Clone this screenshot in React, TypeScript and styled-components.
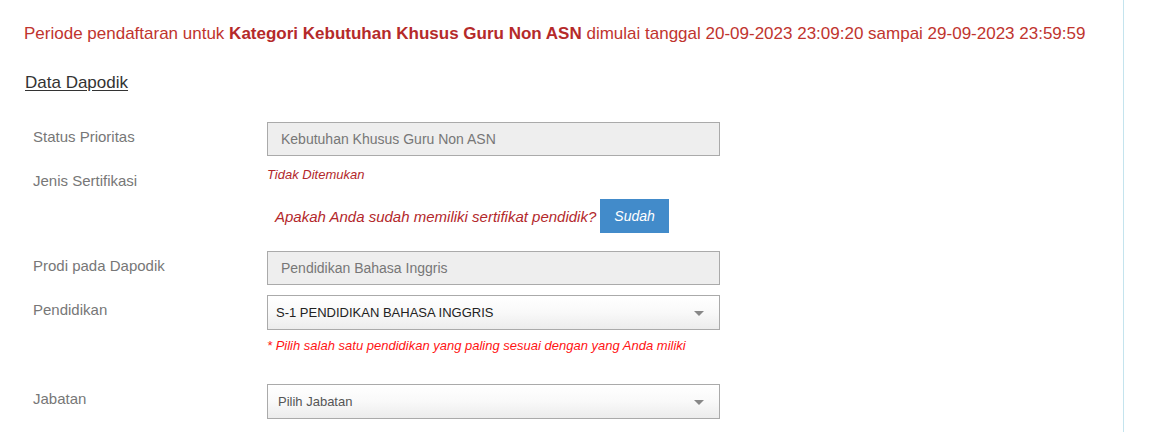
import React from 'react';
import styled, { createGlobalStyle } from 'styled-components';

const GlobalStyle = createGlobalStyle`
  html, body {
    margin: 0;
    padding: 0;
    background: #ffffff;
    font-family: 'Liberation Sans', Arial, sans-serif;
  }
`;

const Page = styled.div`
  width: 1124px;
  height: 432px;
  box-sizing: border-box;
  border-right: 1px solid #c4e4ee;
  padding: 22px 0 0 24px;
  overflow: hidden;
`;

const Notice = styled.p`
  margin: 0;
  font-size: 17px;
  line-height: 24px;
  color: #c0342e;
  white-space: nowrap;

  b {
    color: #b52a2a;
  }
`;

const SectionTitle = styled.h4`
  margin: 25px 0 0 1px;
  font-size: 17px;
  line-height: 24px;
  font-weight: normal;
  color: #333;
  text-decoration: underline;
  text-underline-offset: 2px;
`;

const Form = styled.div`
  margin-top: 27px;
  padding-left: 9px;
`;

const Row = styled.div<{ $gap?: number }>`
  display: grid;
  grid-template-columns: 234px 453px;
  margin-bottom: ${p => p.$gap ?? 10}px;
`;

const Label = styled.label`
  padding-top: 5px;
  font-size: 15px;
  line-height: 20px;
  color: #777;
`;

const Field = styled.div`
  display: flex;
  flex-direction: column;
`;

const ReadOnly = styled.div`
  height: 34px;
  box-sizing: border-box;
  border: 1px solid #aaa;
  background: #eeeeee;
  padding: 0 13px;
  display: flex;
  align-items: center;
  font-size: 14px;
  color: #777;
`;

const SelectBox = styled.div<{ $muted?: boolean }>`
  position: relative;
  height: 35px;
  box-sizing: border-box;
  border: 1px solid #aaa;
  background: linear-gradient(to bottom, #ffffff 0%, #f9f9f9 50%, #ececec 100%);
  padding: 0 30px 0 ${p => (p.$muted ? 10 : 8)}px;
  display: flex;
  align-items: center;
  font-size: 13px;
  color: ${p => (p.$muted ? '#555' : '#222')};
`;

const Caret = styled.span`
  position: absolute;
  right: 15px;
  top: 15px;
  width: 0;
  height: 0;
  border-left: 5px solid transparent;
  border-right: 5px solid transparent;
  border-top: 5px solid #888;
`;

const Hint = styled.span<{ $bright?: boolean }>`
  font-size: 13px;
  line-height: 18px;
  font-style: italic;
  color: ${p => (p.$bright ? '#ff1414' : '#b3282b')};
  margin-top: ${p => (p.$bright ? 7 : 0)}px;
`;

const Question = styled.div`
  display: flex;
  align-items: center;
  gap: 4px;
  margin-top: 15px;
  padding-left: 8px;
  font-size: 15px;
  font-style: italic;
  color: #b3282b;
  white-space: nowrap;
`;

const Button = styled.button`
  height: 34px;
  padding: 0 14px;
  border: none;
  background: #428bca;
  color: #fff;
  font-family: 'Liberation Sans', Arial, sans-serif;
  font-size: 14px;
  font-style: italic;
  cursor: pointer;
`;

const App: React.FC = () => {
  return (
    <>
      <GlobalStyle />
      <Page>
        <Notice>
          Periode pendaftaran untuk <b>Kategori Kebutuhan Khusus Guru Non ASN</b> dimulai tanggal
          20-09-2023 23:09:20 sampai 29-09-2023 23:59:59
        </Notice>
        <SectionTitle>Data Dapodik</SectionTitle>
        <Form>
          <Row>
            <Label>Status Prioritas</Label>
            <ReadOnly>Kebutuhan Khusus Guru Non ASN</ReadOnly>
          </Row>
          <Row $gap={18}>
            <Label>Jenis Sertifikasi</Label>
            <Field>
              <Hint>Tidak Ditemukan</Hint>
              <Question>
                Apakah Anda sudah memiliki sertifikat pendidik?
                <Button type="button">Sudah</Button>
              </Question>
            </Field>
          </Row>
          <Row>
            <Label>Prodi pada Dapodik</Label>
            <ReadOnly>Pendidikan Bahasa Inggris</ReadOnly>
          </Row>
          <Row $gap={29}>
            <Label>Pendidikan</Label>
            <Field>
              <SelectBox>
                S-1 PENDIDIKAN BAHASA INGGRIS
                <Caret />
              </SelectBox>
              <Hint $bright>* Pilih salah satu pendidikan yang paling sesuai dengan yang Anda miliki</Hint>
            </Field>
          </Row>
          <Row>
            <Label>Jabatan</Label>
            <SelectBox $muted>
              Pilih Jabatan
              <Caret />
            </SelectBox>
          </Row>
        </Form>
      </Page>
    </>
  );
};

export default App;
